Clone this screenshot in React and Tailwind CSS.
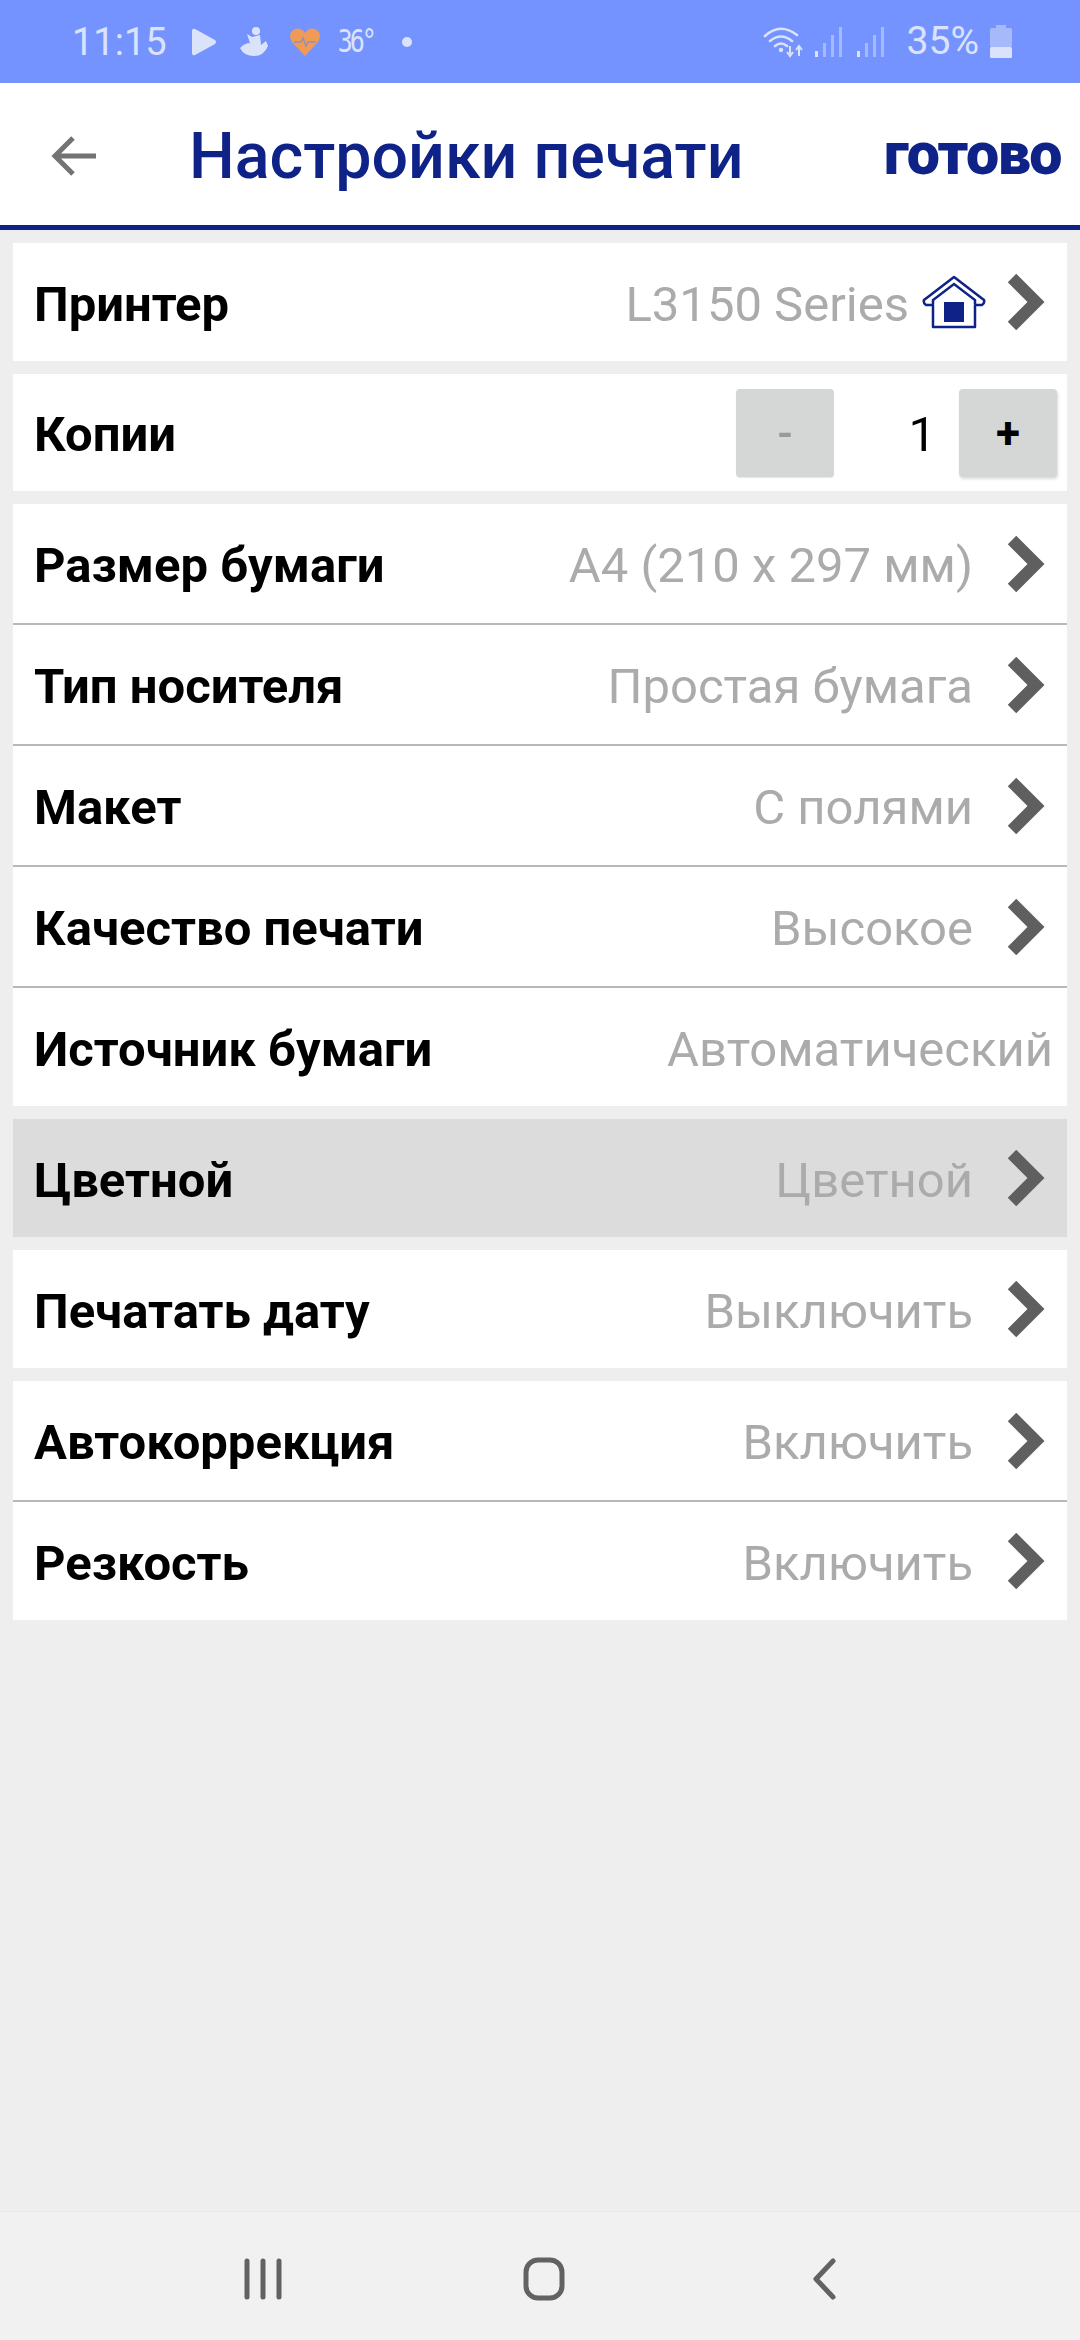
import React from 'react';

const Chevron = () => (
  <svg width="38" height="56" viewBox="0 0 38 56" className="shrink-0">
    <path d="M5 4 L29 28 L5 52" fill="none" stroke="#5f5f5f" strokeWidth="12" />
  </svg>
);

const HomeIcon = () => (
  <svg width="64" height="54" viewBox="0 0 64 54" className="shrink-0">
    <path
      d="M32 2 L62 25 Q63 28 60 30 L53 30 L53 52 L11 52 L11 30 L4 30 Q1 28 2 25 Z"
      fill="none"
      stroke="#0f2288"
      strokeWidth="2.5"
      strokeLinejoin="round"
    />
    <path d="M11 29 L11 25 L32 9 L53 25 L53 29" fill="none" stroke="#0f2288" strokeWidth="2.5" />
    <rect x="22" y="27" width="20" height="20" fill="#0f2288" />
  </svg>
);

function Row({ label, value, chevron = true, selected, divider, icon }) {
  return (
    <div className={`flex items-center pl-[21px] ${selected ? 'bg-[#dcdcdc]' : ''} ${divider ? 'h-[121px] border-b-2 border-[#b8b8b8]' : 'h-[118px]'}`}>
      <span className="mt-[4px] text-[49px] font-bold leading-none text-black">{label}</span>
      <span className={`ml-auto mt-[4px] text-[49px] leading-none text-[#ababab] ${chevron ? '' : 'mr-[14px]'}`}>{value}</span>
      {icon && <span className="ml-[13px] flex"><HomeIcon /></span>}
      {chevron && <span className={`flex pr-[22px] ${icon ? 'ml-[21px]' : 'ml-[34px]'}`}><Chevron /></span>}
    </div>
  );
}

export default function App() {
  return (
    <div className="flex h-[2340px] w-[1080px] flex-col bg-[#eeeeee] font-['Roboto',sans-serif]">
      {/* Status bar */}
      <div className="flex h-[83px] items-center bg-[#7593ff] pl-[72px] pr-[68px] text-[#dbe3fb]">
        <span className="text-[38px] leading-none">11:15</span>
        <svg width="26" height="30" viewBox="0 0 26 30" className="ml-[24px]">
          <path d="M1 4 Q1 1 4 2 L24 13 Q26 15 24 17 L4 28 Q1 29 1 26 Z" fill="currentColor" />
        </svg>
        <svg width="30" height="32" viewBox="0 0 30 32" className="ml-[22px]">
          <circle cx="17" cy="5" r="4" fill="currentColor" />
          <path d="M8 8 L13 11 L21 9 L22 19 L27 15 L29 20 Q25 30 15 30 Q5 30 1 22 Q6 17 11 17 Z" fill="currentColor" />
        </svg>
        <svg width="32" height="30" viewBox="0 0 32 30" className="ml-[20px]">
          <path d="M16 29 L3 15 Q-2 6 6 2 Q12 0 16 6 Q20 0 26 2 Q34 6 29 15 Z" fill="#ef9a56" />
          <path d="M5 15 L12 15 L14 11 L17 19 L19 15 L27 15" fill="none" stroke="#8f92b8" strokeWidth="1.5" />
        </svg>
        <span className="ml-[17px] origin-center scale-y-[1.25] font-['DejaVu_Sans_Mono',monospace] text-[25px] font-light leading-none tracking-[-3px]">36°</span>
        <span className="ml-[28px] h-[10px] w-[10px] rounded-full bg-[#dbe3fb]" />

        <svg width="42" height="34" viewBox="0 0 42 34" className="ml-auto">
          <path d="M2 11 Q17 -3 34 10 M7 16 Q18 7 29 16 M12 21 Q18 16 24 21" fill="none" stroke="currentColor" strokeWidth="2.6" strokeLinecap="round" />
          <circle cx="18" cy="25" r="2.2" fill="currentColor" />
          <path d="M27 21 V31 M24 27 L27 31 L30 27 M36 31 V21 M33 25 L36 21 L39 25" fill="none" stroke="currentColor" strokeWidth="2" />
        </svg>
        <svg width="32" height="32" viewBox="0 0 32 32" className="ml-[9px]">
          <rect x="1" y="25" width="3" height="6" fill="#dbe3fb" />
          <rect x="9" y="17" width="3" height="14" fill="#a5b9fb" />
          <rect x="17" y="9" width="3" height="22" fill="#a5b9fb" />
          <rect x="25" y="1" width="3" height="30" fill="#a5b9fb" />
        </svg>
        <svg width="32" height="32" viewBox="0 0 32 32" className="ml-[10px]">
          <rect x="1" y="25" width="3" height="6" fill="#dbe3fb" />
          <rect x="9" y="17" width="3" height="14" fill="#a5b9fb" />
          <rect x="17" y="9" width="3" height="22" fill="#a5b9fb" />
          <rect x="25" y="1" width="3" height="30" fill="#a5b9fb" />
        </svg>
        <span className="ml-[19px] text-[39px] leading-none">35%</span>
        <svg width="22" height="34" viewBox="0 0 22 34" className="ml-[11px]">
          <rect x="6" y="0" width="10" height="4" fill="#a5b9fb" />
          <rect x="0" y="3" width="22" height="19" rx="1.5" fill="#a5b9fb" />
          <rect x="0" y="22" width="22" height="11" rx="1.5" fill="#dbe3fb" />
        </svg>
      </div>

      {/* Header */}
      <div className="flex h-[147px] items-center border-b-[5px] border-[#0f2288] bg-white pt-[4px]">
        <svg width="48" height="44" viewBox="0 0 48 44" className="ml-[50px]">
          <path d="M46 22 H5 M23 4 L5 22 L23 40" fill="none" stroke="#737373" strokeWidth="5" />
        </svg>
        <span className="ml-[91px] text-[64.5px] font-medium leading-none text-[#0f2288]">Настройки печати</span>
        <span className="mb-[5px] ml-auto mr-[19px] text-[59px] font-black leading-none tracking-[-1.5px] text-[#0f2288]">готово</span>
      </div>

      {/* Settings */}
      <div className="flex flex-col gap-[13px] px-[13px] pt-[13px]">
        <div className="bg-white">
          <Row label="Принтер" value="L3150 Series" icon />
        </div>
        <div className="flex h-[117px] items-center bg-white pl-[21px] pr-[10px]">
          <span className="mt-[4px] text-[49px] font-bold leading-none text-black">Копии</span>
          <span className="ml-auto flex h-[88px] w-[98px] items-center justify-center rounded-[4px] bg-[#d5d7d7] text-[44px] font-medium text-[#999999] shadow-[0_1px_1px_rgba(0,0,0,0.1)]">-</span>
          <span className="mt-[3px] w-[125px] pr-[23px] text-right text-[49px] leading-none text-black">1</span>
          <span className="flex h-[88px] w-[98px] items-center justify-center rounded-[4px] bg-[#d5d7d7] text-[44px] font-bold text-black shadow-[1px_2px_3px_rgba(0,0,0,0.15)]">+</span>
        </div>
        <div className="bg-white">
          <Row label="Размер бумаги" value="A4 (210 x 297 мм)" divider />
          <Row label="Тип носителя" value="Простая бумага" divider />
          <Row label="Макет" value="С полями" divider />
          <Row label="Качество печати" value="Высокое" divider />
          <Row label="Источник бумаги" value="Автоматический" chevron={false} />
        </div>
        <div className="bg-white">
          <Row label="Цветной" value="Цветной" selected />
        </div>
        <div className="bg-white">
          <Row label="Печатать дату" value="Выключить" />
        </div>
      </div>
      <div className="mx-[13px] mt-[13px] bg-white">
        <Row label="Автокоррекция" value="Включить" divider />
        <Row label="Резкость" value="Включить" />
      </div>

      {/* Navigation bar */}
      <div className="mt-auto flex h-[128px] items-center bg-[#f1f1f1] pt-[6px] shadow-[0_-1px_1px_rgba(0,0,0,0.02)]">
        <svg width="38" height="42" viewBox="0 0 38 42" className="ml-[244px]">
          <path d="M3 3 V39 M19 3 V39 M35 3 V39" fill="none" stroke="#626262" strokeWidth="5" strokeLinecap="round" />
        </svg>
        <svg width="42" height="44" viewBox="0 0 42 44" className="ml-[241px]">
          <rect x="3" y="3" width="36" height="38" rx="12" fill="none" stroke="#626262" strokeWidth="5" />
        </svg>
        <svg width="26" height="42" viewBox="0 0 26 42" className="ml-[247px]">
          <path d="M21 3 L4 21 L21 39" fill="none" stroke="#626262" strokeWidth="5" strokeLinecap="round" strokeLinejoin="round" />
        </svg>
      </div>
    </div>
  );
}
